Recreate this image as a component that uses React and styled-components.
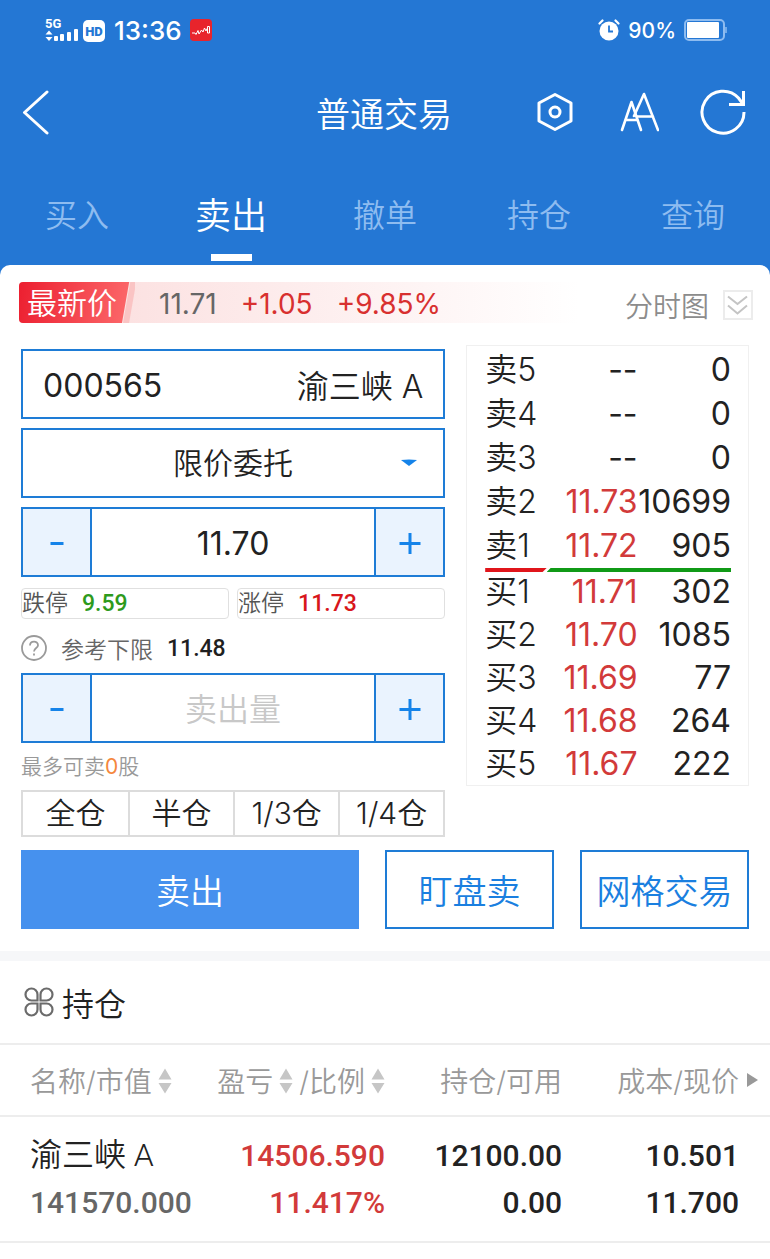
import React, { useState } from "react";
import styled, { createGlobalStyle } from "styled-components";

const tabs = ["买入", "卖出", "撤单", "持仓", "查询"];

const sells = [
    { label: "卖5", price: "--", volume: "0" },
    { label: "卖4", price: "--", volume: "0" },
    { label: "卖3", price: "--", volume: "0" },
    { label: "卖2", price: "11.73", volume: "10699" },
    { label: "卖1", price: "11.72", volume: "905" },
];

const buys = [
    { label: "买1", price: "11.71", volume: "302" },
    { label: "买2", price: "11.70", volume: "1085" },
    { label: "买3", price: "11.69", volume: "77" },
    { label: "买4", price: "11.68", volume: "264" },
    { label: "买5", price: "11.67", volume: "222" },
];

const ratios = ["全仓", "半仓", "1/3仓", "1/4仓"];

export default function App() {
    const [tab, setTab] = useState("卖出");
    const [price, setPrice] = useState("11.70");
    const [amount, setAmount] = useState("");

    const changePrice = (step) => setPrice((Number(price) + step).toFixed(2));
    const changeAmount = (step) => setAmount(String(Math.max(0, Number(amount) + step)));

    return (
        <Page>
            <GlobalStyle />
            <Header>
                <StatusBar>
                    <StatusGroup>
                        <SignalIcon />
                        <Clock>13:36</Clock>
                        <StockAppIcon />
                    </StatusGroup>
                    <StatusGroup>
                        <AlarmIcon />
                        <Battery>90%</Battery>
                        <BatteryIcon />
                    </StatusGroup>
                </StatusBar>

                <TitleBar>
                    <IconButton aria-label="返回">
                        <svg width="28" height="46" viewBox="0 0 28 46" fill="none" stroke="#fff" strokeWidth="3">
                            <path d="M25 3 2.500 23.500 25 44" strokeLinecap="round" strokeLinejoin="round" />
                        </svg>
                    </IconButton>
                    <h1>普通交易</h1>
                    <Tools>
                        <IconButton aria-label="设置">
                            <svg width="36" height="40" viewBox="0 0 36 40" fill="none" stroke="#fff" strokeWidth="3">
                                <path d="M18 2.500 34 11v18L18 37.500 2 29V11Z" strokeLinejoin="round" />
                                <circle cx="18" cy="20" r="5" />
                            </svg>
                        </IconButton>
                        <IconButton aria-label="字体">
                            <svg width="40" height="40" viewBox="-2 0 40 40" fill="none" stroke="#fff" strokeWidth="2.600" strokeLinecap="round" strokeLinejoin="round">
                                <path d="M1 38 10.500 10 20 38M4.500 28H16.500" />
                                <path d="M13 24 23 2 37 38M16 24.500H32" />
                            </svg>
                        </IconButton>
                        <IconButton aria-label="刷新">
                            <svg width="46" height="46" viewBox="0 0 46 46" fill="none" stroke="#fff" strokeWidth="3">
                                <path d="M44 23A21 21 0 1 1 38.500 9L43 15" />
                                <path d="M29 15.500H43.500V2" />
                            </svg>
                        </IconButton>
                    </Tools>
                </TitleBar>

                <Tabs>
                    {tabs.map((name) => (
                        <Tab key={name} $active={name === tab} onClick={() => setTab(name)}>{name}</Tab>
                    ))}
                </Tabs>
            </Header>

            <Sheet>
                <QuoteRow>
                    <Quote>
                        <QuoteTag>最新价</QuoteTag>
                        <QuoteValue>11.71</QuoteValue>
                        <QuoteValue $up>+1.05</QuoteValue>
                        <QuoteValue $up>+9.85%</QuoteValue>
                    </Quote>
                    <ChartButton>
                        分时图
                        <svg width="30" height="30" viewBox="0 0 30 30" fill="none" stroke="#c4c4c4" strokeWidth="2">
                            <rect x="1" y="1" width="28" height="28" stroke="#ececec" />
                            <path d="M5 6.500 14.500 14 24 6.500M5 15.500 14.500 23.500 24 15.500" />
                        </svg>
                    </ChartButton>
                </QuoteRow>

                <Trade>
                    <Form>
                        <Box>
                            <CodeInput aria-label="证券代码" defaultValue="000565" />
                            <StockName>渝三峡 A</StockName>
                        </Box>
                        <SelectBox>
                            <select aria-label="委托方式" defaultValue="limit">
                                <option value="limit">限价委托</option>
                                <option value="market">市价委托</option>
                            </select>
                            <svg width="16" height="8" viewBox="0 0 16 8">
                                <path d="M0 1Q8 0 16 1L8 7Z" fill="#1583e9" />
                            </svg>
                        </SelectBox>
                        <Stepper>
                            <StepButton aria-label="减少价格" onClick={() => changePrice(-0.01)}><MinusIcon /></StepButton>
                            <input aria-label="价格" value={price} onChange={(e) => setPrice(e.target.value)} />
                            <StepButton aria-label="增加价格" onClick={() => changePrice(0.01)}><PlusIcon /></StepButton>
                        </Stepper>
                        <Limits>
                            <Limit>跌停<Num $color="#2e9a1c">9.59</Num></Limit>
                            <Limit>涨停<Num $color="#d8161b">11.73</Num></Limit>
                        </Limits>
                        <Reference>
                            <HelpIcon />
                            <span>参考下限</span>
                            <Num $color="#1f1f1f">11.48</Num>
                        </Reference>
                        <Stepper>
                            <StepButton aria-label="减少数量" onClick={() => changeAmount(-100)}><MinusIcon /></StepButton>
                            <input aria-label="卖出量" placeholder="卖出量" value={amount} onChange={(e) => setAmount(e.target.value)} />
                            <StepButton aria-label="增加数量" onClick={() => changeAmount(100)}><PlusIcon /></StepButton>
                        </Stepper>
                        <MaxAmount>最多可卖<b>0</b>股</MaxAmount>
                        <Ratios>
                            {ratios.map((ratio) => <button key={ratio}>{ratio}</button>)}
                        </Ratios>
                    </Form>

                    <Book>
                        <BookSide rows={sells} height={44} />
                        <Pressure><i /><i /></Pressure>
                        <BookSide rows={buys} height={43} />
                    </Book>
                </Trade>

                <Actions>
                    <ActionButton $primary>卖出</ActionButton>
                    <ActionButton>盯盘卖</ActionButton>
                    <ActionButton>网格交易</ActionButton>
                </Actions>
            </Sheet>

            <Holdings>
                <h2><CloverIcon />持仓</h2>
                <HoldingTable>
                    <thead>
                        <tr>
                            <th>名称/市值<SortIcon /></th>
                            <th>盈亏<SortIcon />/比例<SortIcon /></th>
                            <th>持仓/可用</th>
                            <th>
                                成本/现价
                                <MoreArrow width="11" height="14" viewBox="0 0 11 14"><path d="M0 0 11 7 0 14Z" fill="#999" /></MoreArrow>
                            </th>
                        </tr>
                    </thead>
                    <tbody>
                        <tr>
                            <td><strong>渝三峡 A</strong><Muted>141570.000</Muted></td>
                            <Profit><span>14506.590</span><span>11.417%</span></Profit>
                            <td><span>12100.00</span><span>0.00</span></td>
                            <td><span>10.501</span><span>11.700</span></td>
                        </tr>
                    </tbody>
                </HoldingTable>
            </Holdings>
        </Page>
    )
}

function BookSide({ rows, height }) {
    return (
        <BookTable $height={height}>
            <tbody>
                {rows.map((row) => (
                    <tr key={row.label}>
                        <th scope="row">{row.label}</th>
                        <Price $empty={row.price === "--"}>{row.price}</Price>
                        <td>{row.volume}</td>
                    </tr>
                ))}
            </tbody>
        </BookTable>
    )
}

function SignalIcon() {
    return (
        <svg width="61" height="28" viewBox="0 0 61 28" fill="#fff">
            <text x="0" y="12" fontFamily="Roboto, sans-serif" fontWeight="700" fontSize="13">5G</text>
            <path d="M0.500 18.500 4 14.500 7.500 18.500ZM0.500 21 4 25 7.500 21Z" />
            <rect x="9" y="20" width="4" height="5" rx="1" />
            <rect x="15" y="18" width="4" height="7" rx="1" />
            <rect x="22" y="16" width="4" height="9" rx="1" />
            <rect x="29" y="13" width="4" height="12" rx="1" />
            <rect x="38" y="4" width="22" height="22" rx="5" />
            <text x="49" y="20" textAnchor="middle" fontFamily="Roboto, sans-serif" fontWeight="900" fontSize="13" fill="#2477d4">HD</text>
        </svg>
    )
}

function StockAppIcon() {
    return (
        <svg width="22" height="22" viewBox="0 0 22 22">
            <rect width="22" height="22" rx="4" fill="#e8242c" />
            <path d="M2 14H5L6 15.500 8 11.500 9 15 11.500 11 13 13 14.500 9 16 12 17 9.500M17.500 7.500H19.500V14H17.500Z" fill="none" stroke="#fff" strokeWidth="1" />
        </svg>
    )
}

function AlarmIcon() {
    return (
        <svg width="22" height="22" viewBox="0 0 22 22">
            <circle cx="11" cy="12" r="9.500" fill="#fff" />
            <path d="M1.500 4.500 4.500 1.500M20.500 4.500 17.500 1.500" stroke="#fff" strokeWidth="2.200" strokeLinecap="round" />
            <path d="M11 6.500V12.500H15" fill="none" stroke="#2477d4" strokeWidth="1.800" />
        </svg>
    )
}

function BatteryIcon() {
    return (
        <svg width="43" height="22" viewBox="0 0 43 22">
            <rect x="1" y="1" width="39" height="20" rx="4" fill="none" stroke="#8ebcf0" strokeWidth="2" />
            <rect x="3" y="3" width="32" height="16" rx="1" fill="#fff" />
            <path d="M42 8V14" stroke="#8ebcf0" strokeWidth="1.500" />
        </svg>
    )
}

function MinusIcon() {
    return (
        <svg width="22" height="22" viewBox="0 0 22 22">
            <path d="M4.500 12.500H17.500" stroke="#1583e9" strokeWidth="3" />
        </svg>
    )
}

function PlusIcon() {
    return (
        <svg width="22" height="24" viewBox="0 0 22 24">
            <path d="M0.500 13.500H21.500M11 3V24" stroke="#1583e9" strokeWidth="3" />
        </svg>
    )
}

function HelpIcon() {
    return (
        <svg width="26" height="26" viewBox="0 0 26 26" fill="none" stroke="#9a9a9a" strokeWidth="1.800">
            <circle cx="13" cy="13" r="12" />
            <path d="M9 10.500C9 5.500 17 5.500 17 10.200 17 13 13 13 13 16.500" />
            <path d="M13 18.500V20.500" />
        </svg>
    )
}

function SortIcon() {
    return (
        <svg width="14" height="26" viewBox="0 0 14 26" fill="#c6c6c6">
            <path d="M7 0.500 13.500 11.500H0.500ZM7 25.500 13.500 15H0.500Z" />
        </svg>
    )
}

function CloverIcon() {
    return (
        <svg width="30" height="30" viewBox="0 0 30 30" fill="none" stroke="#6b6b6b" strokeWidth="2.200">
            <path d="M13.500 13.500H7.500A6 6 0 1 1 13.500 7.500Z" />
            <path d="M16.500 13.500H22.500A6 6 0 1 0 16.500 7.500Z" />
            <path d="M13.500 16.500H7.500A6 6 0 1 0 13.500 22.500Z" />
            <path d="M16.500 16.500H22.500A6 6 0 1 1 16.500 22.500Z" />
        </svg>
    )
}

const GlobalStyle = createGlobalStyle`
    *{
        box-sizing: border-box;
    }

    body{
        margin: 0;
        background-color: #fff;
        font-family: Inter, 'Noto Sans CJK SC', sans-serif;
        font-weight: 350;
        color: #222;
    }

    button, input, select{
        margin: 0;
        padding: 0;
        border: none;
        border-radius: 0;
        background: none;
        font: inherit;
        color: inherit;
    }

    button{
        cursor: pointer;
    }

    h1, h2, p{
        margin: 0;
        font-weight: 350;
    }

    svg{
        display: block;
        flex-shrink: 0;
    }
`

const Page = styled.div`
    width: 100%;
    overflow-x: hidden;
`

const Header = styled.header`
    padding-bottom: 14px;
    background-color: #2477d4;
    color: #fff;
`

const StatusBar = styled.div`
    display: flex;
    align-items: center;
    justify-content: space-between;
    height: 60px;
    padding: 0 43px 0 45px;
`

const StatusGroup = styled.div`
    display: flex;
    align-items: center;
    gap: 8px;
`

const Clock = styled.span`
    font-size: 26px;
    font-weight: 500;
`

const Battery = styled.span`
    font-size: 21px;
    font-weight: 500;
`

const TitleBar = styled.div`
    display: grid;
    grid-template-columns: 1fr auto 1fr;
    align-items: center;
    height: 104px;
    padding: 0 24px 0 22px;

    h1{
        font-size: 34px;
    }
`

const Tools = styled.div`
    display: flex;
    align-items: center;
    justify-content: flex-end;
    gap: 38px;
`

const IconButton = styled.button`
    display: flex;
    justify-content: center;
    justify-self: start;

    ${Tools} &{
        width: 46px;
    }
`

const Tabs = styled.nav`
    display: grid;
    grid-template-columns: repeat(5, 1fr);
    height: 97px;
`

const Tab = styled.button`
    display: flex;
    flex-direction: column;
    align-items: center;
    justify-content: space-between;
    padding-top: 20px;
    font-size: ${(props) => (props.$active ? "36px" : "32px")};
    line-height: 64px;
    color: ${(props) => (props.$active ? "#fff" : "#8ebcf0")};

    &::after{
        content: "";
        width: 41px;
        height: 7px;
        background-color: ${(props) => (props.$active ? "#fff" : "transparent")};
    }
`

const Sheet = styled.main`
    margin-top: -10px;
    padding: 17px 21px 22px;
    border-radius: 10px 10px 0 0;
    background-color: #fff;
`

const QuoteRow = styled.div`
    display: flex;
    align-items: center;
    justify-content: space-between;
    height: 41px;
    margin: 0 -4px 0 -2px;
`

const Quote = styled.div`
    display: flex;
    align-items: center;
    flex: 1;
    height: 41px;
    gap: 24px;
    border-radius: 4px;
    background: linear-gradient(90deg, #fce2e2 110px, #fff 560px);
`

const QuoteTag = styled.span`
    height: 41px;
    width: 116px;
    padding-left: 8px;
    border-radius: 4px 0 0 4px;
    background: linear-gradient(100deg, transparent 109px, #fac4c4 110px, #fac4c4 115px, transparent 116px), linear-gradient(100deg, #ec1f30, #fb6467 108px, transparent 109px);
    font-size: 30px;
    line-height: 43px;
    color: #fff;
`

const QuoteValue = styled.span`
    padding-top: 3px;
    font-size: 28px;
    font-weight: 400;
    color: ${(props) => (props.$up ? "#d8302f" : "#666")};
`

const ChartButton = styled.button`
    display: flex;
    align-items: center;
    gap: 14px;
    padding-top: 4px;
    font-size: 28px;
    color: #8c8c8c;
`

const Trade = styled.div`
    display: grid;
    grid-template-columns: minmax(0, 3fr) minmax(0, 2fr);
    align-items: start;
    gap: 21px;
    margin-top: 22px;
`

const Form = styled.div`
    display: flex;
    flex-direction: column;
    gap: 9px;
    padding-top: 4px;
`

const Box = styled.div`
    display: flex;
    align-items: center;
    height: 70px;
    padding: 0 20px;
    border: solid 2px #1e7cd6;
    font-size: 32px;
`

const CodeInput = styled.input`
    flex: 1;
    min-width: 0;
    padding-top: 2px;
    font-weight: 400;
`

const StockName = styled.span`
    white-space: nowrap;
`

const SelectBox = styled.div`
    display: grid;
    align-items: center;
    height: 70px;
    border: solid 2px #1e7cd6;
    font-size: 30px;

    select, svg{
        grid-area: 1 / 1;
    }

    select{
        height: 66px;
        appearance: none;
        text-align: center;
        text-align-last: center;
    }

    svg{
        justify-self: end;
        margin-right: 26px;
        pointer-events: none;
    }
`

const Stepper = styled.div`
    display: grid;
    grid-template-columns: 67px 1fr 67px;
    height: 70px;
    border: solid 2px #1e7cd6;

    input{
        min-width: 0;
        padding-top: 2px;
        border: solid #1e7cd6;
        border-width: 0 2px;
        font-size: 32px;
        font-weight: 400;
        text-align: center;
    }

    input::placeholder{
        font-weight: 350;
        color: #c8c8c8;
        opacity: 1;
    }
`

const StepButton = styled.button`
    display: flex;
    align-items: center;
    justify-content: center;
    background-color: #eaf3fe;
`

const Limits = styled.div`
    display: grid;
    grid-template-columns: 1fr 1fr;
    gap: 8px;
    padding-top: 2px;
`

const Limit = styled.div`
    display: flex;
    align-items: center;
    gap: 14px;
    height: 31px;
    border: solid 1px #e0e0e0;
    border-radius: 4px;
    font-size: 23px;
    line-height: 29px;
    color: #555;
`

const Num = styled.span`
    font-family: Roboto, sans-serif;
    font-size: 23px;
    font-weight: 500;
    color: ${(props) => props.$color};
`

const Reference = styled.div`
    display: flex;
    align-items: center;
    gap: 14px;
    height: 36px;
    margin-top: 2px;
    margin-bottom: -2px;
    font-size: 23px;
    color: #666;
`

const MaxAmount = styled.p`
    font-size: 21px;
    line-height: 29px;
    color: #999;

    b{
        font-weight: 400;
        color: #f5873c;
    }
`

const Ratios = styled.div`
    display: grid;
    grid-template-columns: repeat(4, 1fr);
    height: 47px;
    border: solid 2px #dcdcdc;

    button{
        font-size: 30px;
        line-height: 43px;
        white-space: nowrap;
    }

    button + button{
        border-left: solid 2px #dcdcdc;
    }
`

const Book = styled.section`
    padding: 2px 17px 0 18px;
    border: solid 1px #f0f0f0;
`

const BookTable = styled.table`
    width: 100%;
    table-layout: fixed;
    border-collapse: collapse;
    font-size: 32px;

    th, td{
        height: ${(props) => props.$height}px;
        padding: 0;
        font-weight: 400;
        line-height: 40px;
        text-align: right;
        white-space: nowrap;
    }

    th{
        width: 24%;
        font-weight: 350;
        text-align: left;
    }
`

const Price = styled.td`
    width: 38%;
    color: ${(props) => (props.$empty ? "#222" : "#d23a3a")};
`

const Pressure = styled.div`
    display: flex;
    height: 4px;
    margin-bottom: -2px;

    i:first-child{
        flex: 1;
        background-color: #e0151b;
        clip-path: polygon(0 0, 100% 0, calc(100% - 4px) 100%, 0 100%);
    }

    i:last-child{
        flex: 3;
        background-color: #109a17;
        clip-path: polygon(4px 0, 100% 0, 100% 100%, 0 100%);
    }
`

const Actions = styled.div`
    display: grid;
    grid-template-columns: 2fr 1fr 1fr;
    gap: 26px;
    margin-top: 13px;
`

const ActionButton = styled.button`
    height: 79px;
    border: solid ${(props) => (props.$primary ? "0" : "2px")} #1e7cd6;
    background-color: ${(props) => (props.$primary ? "#4691ee" : "#fff")};
    font-size: 34px;
    white-space: nowrap;
    color: ${(props) => (props.$primary ? "#fff" : "#1a7fe0")};
`

const Holdings = styled.section`
    border-top: solid 10px #f6f7f9;

    h2{
        display: flex;
        align-items: center;
        gap: 8px;
        height: 82px;
        padding-left: 24px;
        font-size: 32px;
    }
`

const HoldingTable = styled.table`
    width: 100%;
    table-layout: fixed;
    border-collapse: collapse;

    tr{
        border-top: solid 2px #ededed;
        border-bottom: solid 2px #ededed;
    }

    th, td{
        width: 23%;
        padding: 0;
        text-align: right;
        white-space: nowrap;
    }

    th{
        height: 72px;
        font-size: 28px;
        font-weight: 350;
        color: #999;
    }

    th svg{
        display: inline-block;
        margin: 0 6px;
        vertical-align: -2px;
    }

    th:nth-child(2) svg:last-child{
        margin-right: 0;
    }

    td{
        padding: 15px 0;
        font-family: Roboto, 'Noto Sans CJK SC', sans-serif;
        font-size: 30px;
        font-weight: 500;
    }

    td span, td strong{
        display: block;
        line-height: 47px;
    }

    td strong{
        font-size: 32px;
        font-weight: 350;
    }

    th:first-child, td:first-child{
        width: 27%;
        padding-left: 30px;
        text-align: left;
    }

    th:last-child, td:last-child{
        width: 27%;
        padding-right: 31px;
    }
`

const MoreArrow = styled.svg`
    && {
        margin: 0 -19px 0 8px;
        vertical-align: 5px;
    }
`

const Profit = styled.td`
    color: #d23a3a;
`

const Muted = styled.span`
    color: #666;
`
